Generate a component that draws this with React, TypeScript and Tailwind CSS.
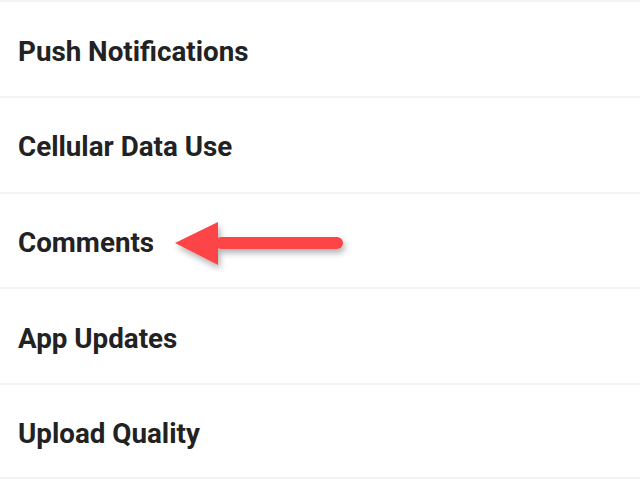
import React from 'react';

const items = ['Push Notifications', 'Cellular Data Use', 'Comments', 'App Updates', 'Upload Quality'];

// red pointer drawn next to the highlighted row
const Arrow: React.FC = () => (
  <svg width="190" height="60" viewBox="0 0 190 60" className="absolute left-[165px] top-[211px]">
    <defs>
      <filter id="shadow" x="-20%" y="-40%" width="140%" height="190%">
        <feDropShadow dx="2" dy="4" stdDeviation="3" floodColor="#000" floodOpacity="0.3" />
      </filter>
    </defs>
    <g filter="url(#shadow)">
      <polygon points="10,32 53,11 53,54" fill="#fd4447" />
      <rect x="50" y="26" width="128" height="12" rx="6" fill="#fd4447" />
    </g>
  </svg>
);

const App: React.FC = () => {
  return (
    <div className="relative w-[640px] h-[480px] overflow-hidden bg-white" style={{ fontFamily: 'Roboto, "Liberation Sans", sans-serif' }}>
      <div className="flex flex-col">
        {items.map((label) => (
          <div key={label} className="h-[95.75px] border-t-2 last:border-b-2 border-[#f3f3f3] flex items-center pl-[18px] pt-[5px]">
            <span className="text-[27.75px] font-bold text-[#222222]">{label}</span>
          </div>
        ))}
      </div>
      <Arrow />
    </div>
  );
};

export default App;
